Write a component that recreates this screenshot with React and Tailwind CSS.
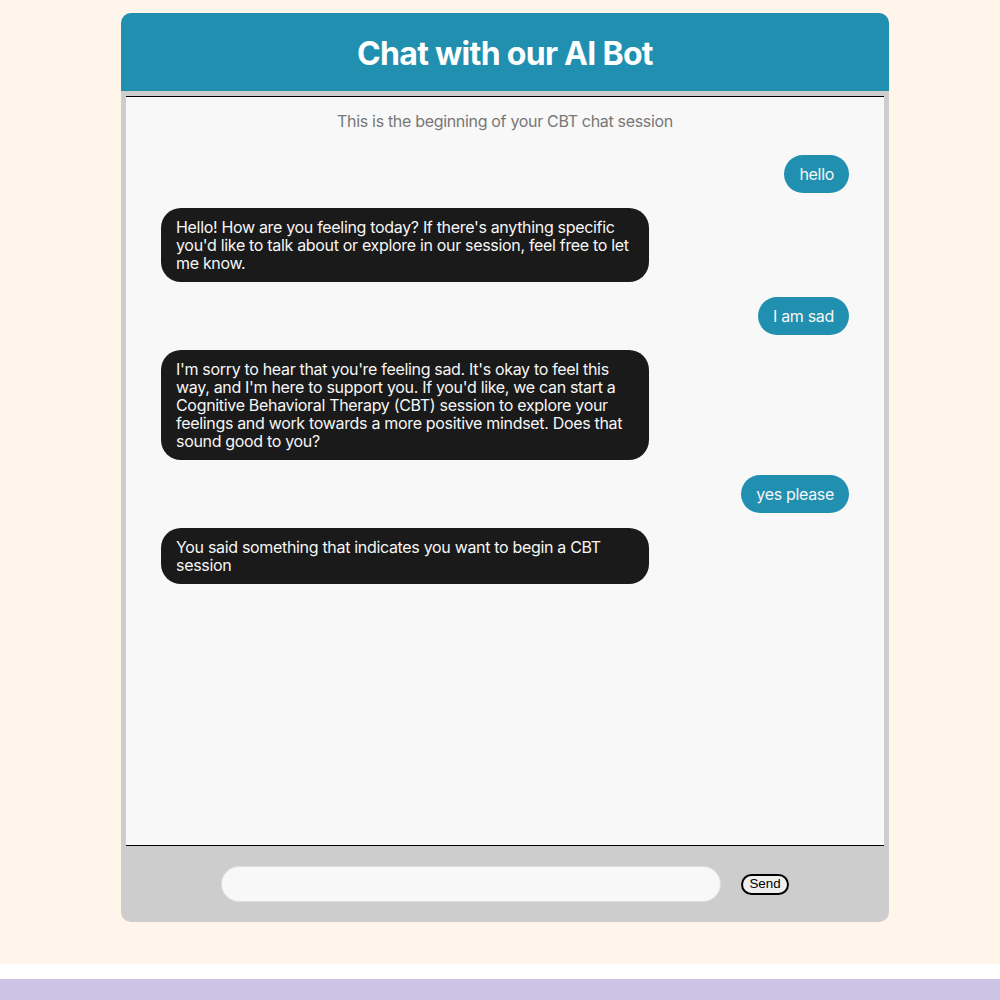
export default function App() {
  const msgs = [
    { u: true, t: "hello" },
    { u: false, t: "Hello! How are you feeling today? If there's anything specific you'd like to talk about or explore in our session, feel free to let me know." },
    { u: true, t: "I am sad" },
    { u: false, t: "I'm sorry to hear that you're feeling sad. It's okay to feel this way, and I'm here to support you. If you'd like, we can start a Cognitive Behavioral Therapy (CBT) session to explore your feelings and work towards a more positive mindset. Does that sound good to you?" },
    { u: true, t: "yes please" },
    { u: false, t: "You said something that indicates you want to begin a CBT session" },
  ];
  return (
    <div className="w-full min-h-[1000px] flex flex-col bg-[#fff5eb]" style={{ fontFamily: "Inter, 'Noto Sans', sans-serif" }}>
      <div className="pt-[13px] pl-[10px] h-[964px] flex justify-center">
        <div className="w-[768px] h-[909px] flex flex-col rounded-[10px] overflow-hidden bg-[#cdcdcd]">
          <div className="h-[78px] shrink-0 bg-[#2190b0] flex items-center justify-center pt-[3px]">
            <h1 className="text-white text-[32px] font-bold leading-none tracking-[-0.7px]">Chat with our AI Bot</h1>
          </div>
          <div className="mx-[5px] mt-[5px] h-[750px] border-y border-black bg-[#f8f8f8] flex flex-col px-[35px] tracking-[-0.32px]">
            <div className="text-center text-[#777777] text-[16px] leading-[18px] pt-[15px] mb-[25px]">This is the beginning of your CBT chat session</div>
            <div className="flex flex-col gap-[15px]">
              {msgs.map((m, i) => (
                <div key={i} className={m.u ? "flex justify-end" : "flex justify-start"}>
                  <div className={(m.u ? "bg-[#2190b0] text-[#f6f6f6] rounded-[19px]" : "bg-[#1a1a1a] text-[#f6f6f6] rounded-[20px] max-w-[488px]") + " px-[15px] py-[10px] text-[16px] leading-[18px]"}>
                    {m.t}
                  </div>
                </div>
              ))}
            </div>
          </div>
          <div className="flex-1 flex items-center justify-center gap-[20px]">
            <input className="w-[500px] h-[36px] rounded-full bg-[#f8f8f8] border border-[#dedede] outline-none px-4" />
            <button className="h-[21px] px-[6px] rounded-full border-2 border-black bg-[#efefef] text-[13.33px] leading-none text-black" style={{ fontFamily: "'Liberation Sans', Arial, sans-serif" }}>Send</button>
          </div>
        </div>
      </div>
      <div className="h-[15px] bg-white" />
      <div className="flex-1 bg-[#cdc3e4]" />
    </div>
  );
}
